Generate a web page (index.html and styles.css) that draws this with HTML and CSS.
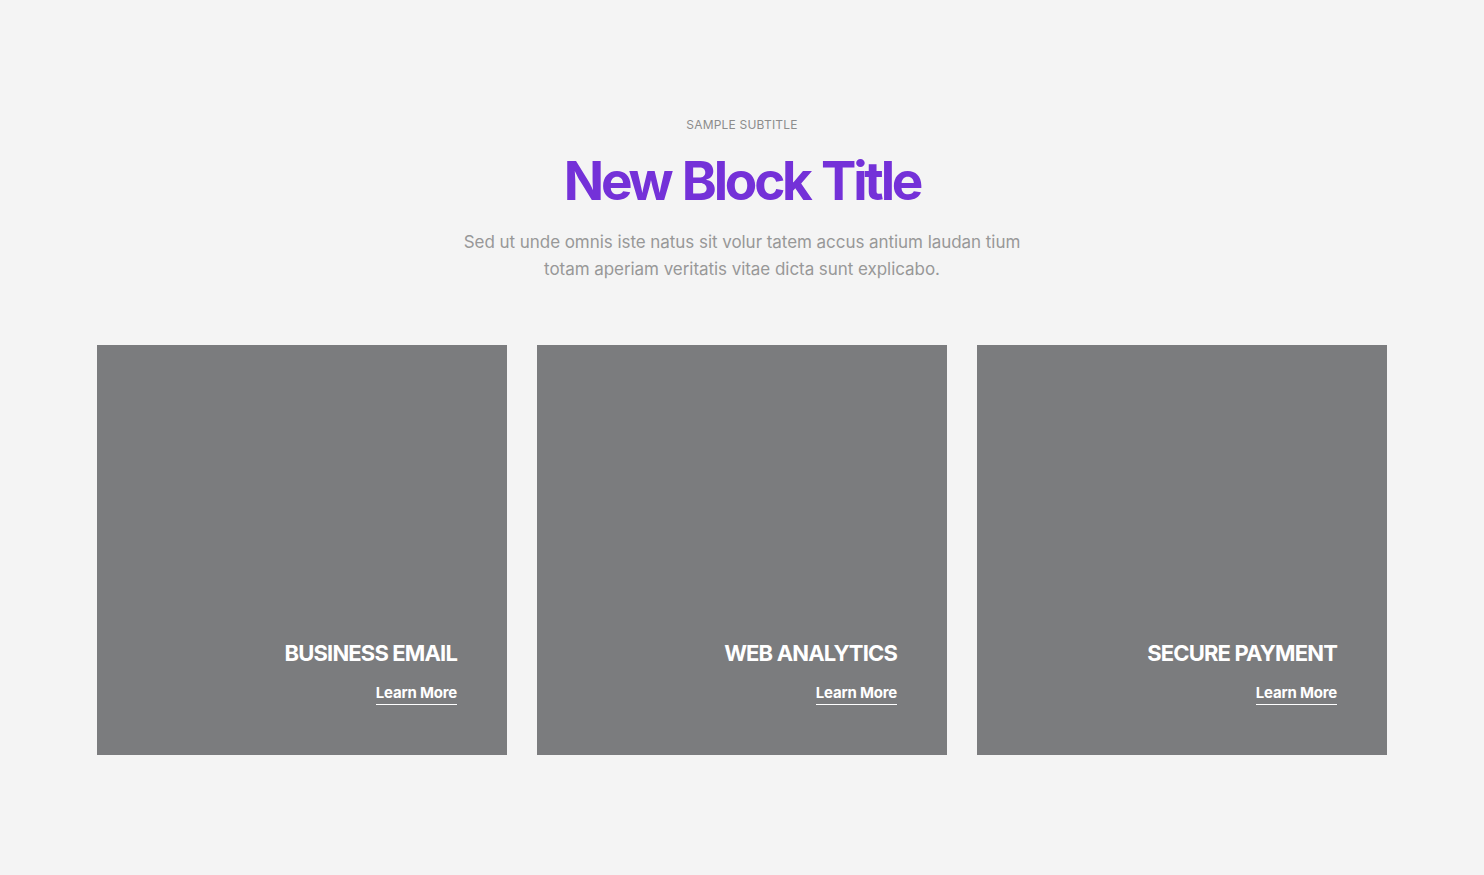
FILE: index.html
```html
<!DOCTYPE html>
<html lang="en">
<head>
<meta charset="utf-8">
<title>New Block Title</title>
<link rel="stylesheet" href="styles.css">
</head>
<body>
<section class="block">
  <header class="block-head">
    <p class="subtitle">SAMPLE SUBTITLE</p>
    <h1 class="title">New Block Title</h1>
    <p class="lead">Sed ut unde omnis iste natus sit volur tatem accus antium laudan tium<br>totam aperiam veritatis vitae dicta sunt explicabo.</p>
  </header>
  <div class="cards">
    <article class="card">
      <h2 class="card-title">BUSINESS EMAIL</h2>
      <a class="card-link" href="#">Learn More</a>
    </article>
    <article class="card">
      <h2 class="card-title">WEB ANALYTICS</h2>
      <a class="card-link" href="#">Learn More</a>
    </article>
    <article class="card">
      <h2 class="card-title">SECURE PAYMENT</h2>
      <a class="card-link" href="#">Learn More</a>
    </article>
  </div>
</section>
</body>
</html>
```
FILE: styles.css
```css
html, body {
  margin: 0;
  padding: 0;
  background: #f4f4f4;
  font-family: Inter, "Noto Sans", "Liberation Sans", sans-serif;
}

.block {
  padding: 117px 97px 120px;
}

.block-head {
  display: flex;
  flex-direction: column;
  align-items: center;
  text-align: center;
}

.subtitle {
  margin: 0;
  font-size: 12px;
  line-height: 16px;
  color: #8c8c8c;
  letter-spacing: 0.2px;
}

.title {
  margin: 16px 0 0;
  font-size: 53px;
  line-height: 64px;
  font-weight: 700;
  color: #7431d8;
  letter-spacing: -3.2px;
  word-spacing: 2px;
}

.lead {
  margin: 16px 0 0;
  font-size: 17px;
  line-height: 27px;
  color: #989898;
  letter-spacing: -0.05px;
}

.cards {
  margin-top: 62px;
  display: grid;
  grid-template-columns: repeat(3, 410px);
  gap: 30px;
}

.card {
  height: 410px;
  box-sizing: border-box;
  background: #7b7c7e;
  display: flex;
  flex-direction: column;
  justify-content: flex-end;
  align-items: flex-end;
  padding: 0 50px 50px;
}

.card-title {
  margin: 0;
  font-size: 22px;
  line-height: 28px;
  font-weight: 700;
  color: #ffffff;
  letter-spacing: -0.85px;
}

.card-link {
  margin-top: 16px;
  font-size: 15px;
  line-height: 20px;
  font-weight: 700;
  color: #ffffff;
  text-decoration: none;
  letter-spacing: -0.2px;
  border-bottom: 1px solid #ffffff;
  padding-bottom: 1px;
}
```
